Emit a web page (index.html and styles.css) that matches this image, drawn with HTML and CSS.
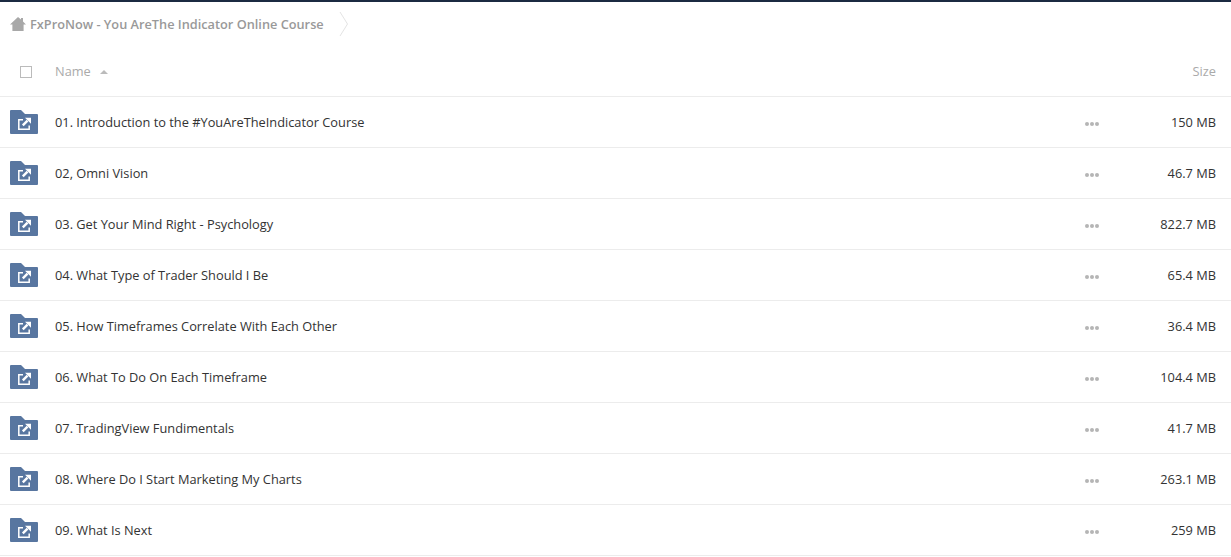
FILE: index.html
```html
<!DOCTYPE html>
<html lang="en">
<head>
<meta charset="utf-8">
<title>FxProNow - You AreThe Indicator Online Course</title>
<link rel="stylesheet" href="styles.css">
</head>
<body>
<div class="topbar"></div>
<nav class="crumbs">
  <svg class="home" viewBox="0 0 16 14" width="16" height="14"><path d="M8 0 L11 2.6 V1 H13 V4.4 L16 7.4 H13.6 V14 H2.4 V7.4 H0 Z" fill="#a8a8a8"/></svg>
  <span class="crumb-text">FxProNow - You AreThe Indicator Online Course</span>
  <svg class="chev" viewBox="0 0 10 26" width="10" height="26"><path d="M1 1 L8.5 13 L1 25" fill="none" stroke="#e4e4e4" stroke-width="1"/></svg>
</nav>
<div class="row head">
  <div class="check-cell"><span class="check"></span></div>
  <div class="name">Name <span class="sort"></span></div>
  <div class="size">Size</div>
</div>
<main>
  <div class="row item"><div class="icon-cell"><svg class="folder" viewBox="0 0 28 24" width="28" height="24"><use href="#f"/></svg></div><div class="name">01. Introduction to the #YouAreTheIndicator Course</div><div class="dots"><i></i><i></i><i></i></div><div class="size">150 MB</div></div>
  <div class="row item"><div class="icon-cell"><svg class="folder" viewBox="0 0 28 24" width="28" height="24"><use href="#f"/></svg></div><div class="name">02, Omni Vision</div><div class="dots"><i></i><i></i><i></i></div><div class="size">46.7 MB</div></div>
  <div class="row item"><div class="icon-cell"><svg class="folder" viewBox="0 0 28 24" width="28" height="24"><use href="#f"/></svg></div><div class="name">03. Get Your Mind Right - Psychology</div><div class="dots"><i></i><i></i><i></i></div><div class="size">822.7 MB</div></div>
  <div class="row item"><div class="icon-cell"><svg class="folder" viewBox="0 0 28 24" width="28" height="24"><use href="#f"/></svg></div><div class="name">04. What Type of Trader Should I Be</div><div class="dots"><i></i><i></i><i></i></div><div class="size">65.4 MB</div></div>
  <div class="row item"><div class="icon-cell"><svg class="folder" viewBox="0 0 28 24" width="28" height="24"><use href="#f"/></svg></div><div class="name">05. How Timeframes Correlate With Each Other</div><div class="dots"><i></i><i></i><i></i></div><div class="size">36.4 MB</div></div>
  <div class="row item"><div class="icon-cell"><svg class="folder" viewBox="0 0 28 24" width="28" height="24"><use href="#f"/></svg></div><div class="name">06. What To Do On Each Timeframe</div><div class="dots"><i></i><i></i><i></i></div><div class="size">104.4 MB</div></div>
  <div class="row item"><div class="icon-cell"><svg class="folder" viewBox="0 0 28 24" width="28" height="24"><use href="#f"/></svg></div><div class="name">07. TradingView Fundimentals</div><div class="dots"><i></i><i></i><i></i></div><div class="size">41.7 MB</div></div>
  <div class="row item"><div class="icon-cell"><svg class="folder" viewBox="0 0 28 24" width="28" height="24"><use href="#f"/></svg></div><div class="name">08. Where Do I Start Marketing My Charts</div><div class="dots"><i></i><i></i><i></i></div><div class="size">263.1 MB</div></div>
  <div class="row item"><div class="icon-cell"><svg class="folder" viewBox="0 0 28 24" width="28" height="24"><use href="#f"/></svg></div><div class="name">09. What Is Next</div><div class="dots"><i></i><i></i><i></i></div><div class="size">259 MB</div></div>
</main>
<svg class="defs" width="0" height="0" aria-hidden="true">
  <defs>
    <g id="f">
      <path d="M0 1 a1 1 0 0 1 1-1 H11 L15 4 H27 a1 1 0 0 1 1 1 V23 a1 1 0 0 1-1 1 H1 a1 1 0 0 1-1-1 Z" fill="#5876a0"/>
      <path d="M13 9.8 H8.8 V19.2 H19.2 V15.5" fill="none" stroke="#fff" stroke-width="1.5"/>
      <path d="M12.8 15.4 L17.5 10.7" fill="none" stroke="#fff" stroke-width="2.4"/>
      <path d="M15 7.8 H21 V13.8 Z" fill="#fff"/>
    </g>
  </defs>
</svg>
</body>
</html>
```
FILE: styles.css
```css
* { box-sizing: border-box; }
html, body { margin: 0; padding: 0; background: #fff; overflow: hidden; }
body { font-family: "Open Sans", "Liberation Sans", sans-serif; font-size: 12.8px; color: #333; }
.topbar { height: 2px; background: #1b2a41; }
.crumbs { height: 44px; display: flex; align-items: center; padding-left: 10px; }
.home { flex: none; margin-right: 4px; }
.crumb-text { font-size: 12.75px; font-weight: 600; color: #999; }
.chev { flex: none; margin-left: 15px; }
.row { display: flex; align-items: center; height: 51px; border-bottom: 1px solid #ececec; padding-right: 15px; }
.head { color: #aaa; font-size: 12.8px; }
.check-cell, .icon-cell { flex: none; width: 55px; display: flex; align-items: center; }
.check-cell { padding-left: 20px; padding-top: 1px; }
.icon-cell { padding-left: 10px; }
.check { width: 12px; height: 12px; border: 1px solid #bbb; display: block; }
.name { flex: 1; }
.sort { display: inline-block; margin-left: 6px; vertical-align: 2px; border-left: 4px solid transparent; border-right: 4px solid transparent; border-bottom: 4px solid #bbb; }
.item .name { color: #333; }
.folder { display: block; }
.dots { flex: none; width: 16px; display: flex; gap: 1px; margin-top: 4px; }
.dots i { width: 4px; height: 4px; border-radius: 50%; background: #b5b5b5; display: block; }
.size { flex: none; width: 115px; text-align: right; }
.defs { position: absolute; }
```
